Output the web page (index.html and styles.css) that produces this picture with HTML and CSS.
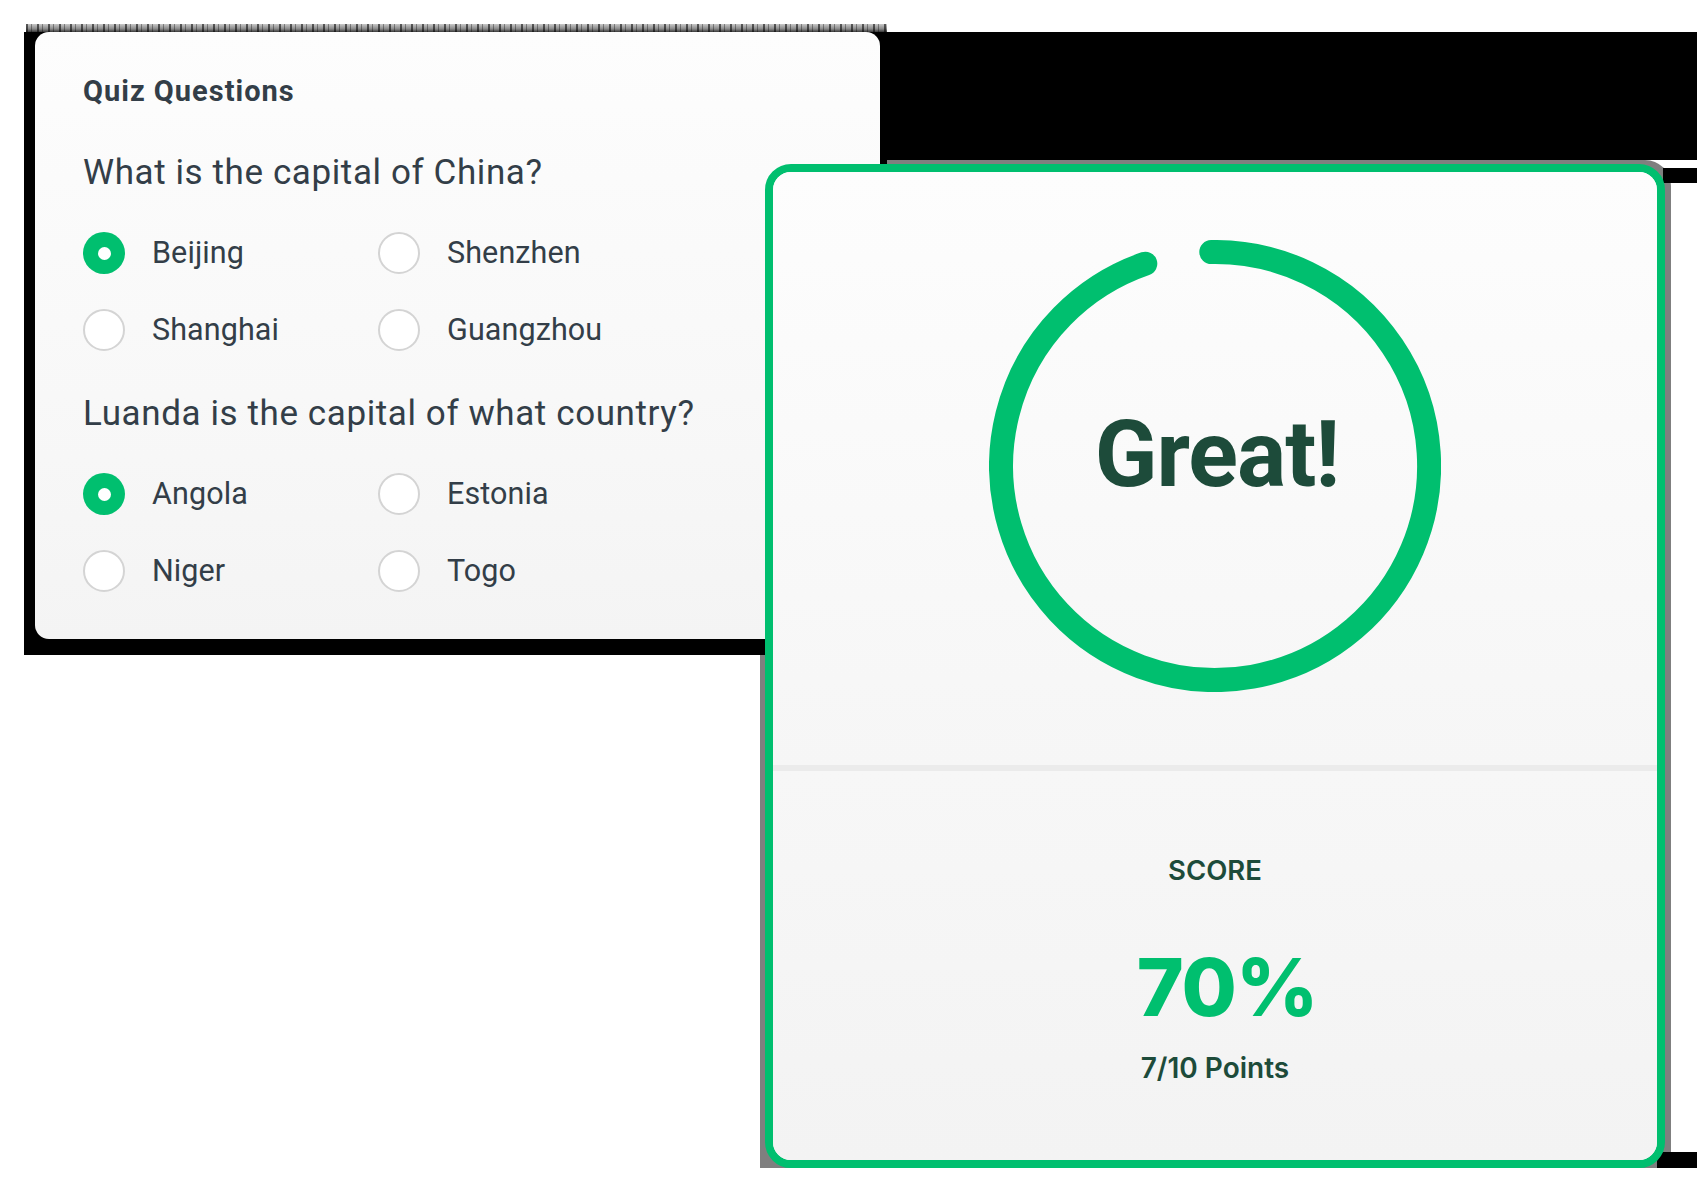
FILE: index.html
```html
<!DOCTYPE html>
<html lang="en">
<head>
<meta charset="utf-8">
<title>Quiz Result</title>
<link rel="stylesheet" href="styles.css">
</head>
<body>
<div class="stage">
  <div class="deco deco-gray"></div>
  <div class="deco deco-quiz-shadow"></div>
  <div class="deco deco-noise"></div>
  <div class="deco deco-black-top"></div>

  <section class="quiz-card">
    <h2 class="quiz-title">Quiz Questions</h2>

    <div class="question">
      <p class="question-text">What is the capital of China?</p>
      <div class="options">
        <label class="option"><span class="radio checked"></span><span class="option-label">Beijing</span></label>
        <label class="option"><span class="radio"></span><span class="option-label">Shenzhen</span></label>
        <label class="option"><span class="radio"></span><span class="option-label">Shanghai</span></label>
        <label class="option"><span class="radio"></span><span class="option-label">Guangzhou</span></label>
      </div>
    </div>

    <div class="question">
      <p class="question-text">Luanda is the capital of what country?</p>
      <div class="options">
        <label class="option"><span class="radio checked"></span><span class="option-label">Angola</span></label>
        <label class="option"><span class="radio"></span><span class="option-label">Estonia</span></label>
        <label class="option"><span class="radio"></span><span class="option-label">Niger</span></label>
        <label class="option"><span class="radio"></span><span class="option-label">Togo</span></label>
      </div>
    </div>
  </section>

  <div class="deco deco-black-b"></div>
  <div class="deco deco-black-c"></div>

  <section class="result-card">
    <div class="result-top">
      <div class="ring">
        <svg class="ring-svg" width="452" height="452" viewBox="0 0 452 452" aria-hidden="true">
          <path d="M 222.3 12.03 A 214 214 0 1 1 156.3 23.7" fill="none" stroke="#00bf6f" stroke-width="24" stroke-linecap="round"/>
        </svg>
        <div class="ring-text">Great!</div>
      </div>
    </div>
    <div class="divider"></div>
    <div class="result-bottom">
      <div class="score-label">SCORE</div>
      <div class="score-value">70%</div>
      <div class="score-points">7/10 Points</div>
    </div>
  </section>
</div>
</body>
</html>
```

FILE: styles.css
```css
* { box-sizing: border-box; }

html, body {
  margin: 0;
  padding: 0;
  background: #ffffff;
}

.stage {
  position: relative;
  width: 1700px;
  height: 1200px;
  overflow: hidden;
  background: #ffffff;
}

/* compositing artifacts of the original image */
.deco { position: absolute; }

.deco-gray {
  left: 760px;
  top: 160px;
  width: 911px;
  height: 1008px;
  background: #7f7f7f;
  border-top-right-radius: 26px;
  z-index: 1;
}

.deco-quiz-shadow {
  left: 24px;
  top: 32px;
  width: 863px;
  height: 623px;
  background: #000000;
  z-index: 2;
}

.deco-noise {
  left: 26px;
  top: 24px;
  width: 861px;
  height: 8px;
  background:
    repeating-linear-gradient(90deg, rgba(0,0,0,0.55) 0 2px, rgba(255,255,255,0) 2px 5px, rgba(0,0,0,0.35) 5px 6px, rgba(255,255,255,0) 6px 11px),
    linear-gradient(180deg, #c8c8c8 0%, #8a8a8a 60%, #3a3a3a 100%);
  z-index: 2;
}

.deco-black-top {
  left: 887px;
  top: 32px;
  width: 810px;
  height: 128px;
  background: #000000;
  z-index: 2;
}

.deco-black-b {
  left: 1663px;
  top: 168px;
  width: 34px;
  height: 15px;
  background: #000000;
  z-index: 4;
}

.deco-black-c {
  left: 1657px;
  top: 1152px;
  width: 40px;
  height: 16px;
  background: #000000;
  z-index: 4;
}

/* quiz card */
.quiz-card {
  position: absolute;
  left: 35px;
  top: 32px;
  width: 845px;
  height: 607px;
  z-index: 3;
  border-radius: 14px;
  background: linear-gradient(180deg, #fdfdfd 0%, #f8f8f8 60%, #f4f4f4 100%);
  padding: 40px 48px 0 48px;
  font-family: Roboto, "Liberation Sans", sans-serif;
  color: #333e48;
}

.quiz-title {
  margin: 0;
  font-size: 29px;
  line-height: 38px;
  font-weight: 700;
  letter-spacing: 1px;
}

.question { margin-top: 41px; }
.question + .question { margin-top: 40px; }

.question-text {
  margin: 0;
  font-size: 35px;
  line-height: 44px;
  font-weight: 400;
  letter-spacing: 0.6px;
}

.options {
  margin-top: 36px;
  display: grid;
  grid-template-columns: 295px 295px;
  row-gap: 33px;
}

.option {
  display: flex;
  align-items: center;
  gap: 27px;
  height: 44px;
}

.radio {
  width: 42px;
  height: 42px;
  border-radius: 50%;
  border: 2.5px solid #d4d4d4;
  background: #ffffff;
  flex: 0 0 auto;
  display: flex;
  align-items: center;
  justify-content: center;
}

.radio.checked {
  border: none;
  background: #00bf6f;
}

.radio.checked::after {
  content: "";
  width: 13px;
  height: 13px;
  border-radius: 50%;
  background: #ffffff;
}

.option-label {
  font-size: 30.5px;
  line-height: 44px;
  letter-spacing: 0.1px;
}

/* result card */
.result-card {
  position: absolute;
  left: 765px;
  top: 164px;
  width: 900px;
  height: 1004px;
  z-index: 5;
  border: 8px solid #00bf6f;
  border-radius: 26px;
  background: #f6f6f6;
  display: flex;
  flex-direction: column;
  overflow: hidden;
  font-family: Inter, "Liberation Sans", sans-serif;
}

.result-top {
  height: 593px;
  background: linear-gradient(180deg, #fdfdfd 0%, #f6f6f6 100%);
  display: flex;
  justify-content: center;
  padding-top: 68px;
}

.ring {
  display: grid;
  width: 452px;
  height: 452px;
}

.ring-svg, .ring-text { grid-area: 1 / 1; }

.ring-text {
  align-self: center;
  justify-self: center;
  margin-bottom: 22px;
  margin-left: 4px;
  font-family: Roboto, "Liberation Sans", sans-serif;
  font-size: 92px;
  line-height: 100px;
  font-weight: 700;
  color: #1d4b3a;
  letter-spacing: -1px;
}

.divider {
  height: 6px;
  background: #ebebeb;
}

.result-bottom {
  flex: 1;
  display: flex;
  flex-direction: column;
  align-items: center;
  padding-top: 84px;
  background: linear-gradient(180deg, #f7f7f7 0%, #f3f3f3 100%);
}

.score-label {
  font-size: 27.5px;
  line-height: 30px;
  font-weight: 600;
  color: #1d4b3a;
}

.score-value {
  margin-top: 59px;
  margin-left: 24px;
  font-size: 80px;
  line-height: 86px;
  font-weight: 800;
  color: #00bf6f;
  letter-spacing: -1px;
}

.score-points {
  margin-top: 22px;
  font-size: 28px;
  line-height: 32px;
  font-weight: 600;
  color: #1d4b3a;
}
```
